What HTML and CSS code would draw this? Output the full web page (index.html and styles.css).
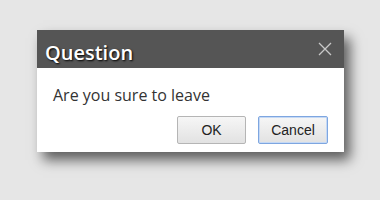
FILE: index.html
```html
<!DOCTYPE html>
<html lang="en">
<head>
  <meta charset="UTF-8">
  <title>Question</title>
  <link rel="stylesheet" href="styles.css">
</head>
<body>

<div class="dialog">
  <div class="dialog-title">
    <span class="title-text">Question</span>
    <svg class="close" width="14" height="14" viewBox="0 0 14 14">
      <path d="M1 1L13 13M13 1L1 13" stroke="#c8c8c8" stroke-width="1.3" fill="none"/>
    </svg>
  </div>
  <div class="dialog-body">
    <p class="message">Are you sure to leave</p>
    <div class="buttons">
      <button class="btn">OK</button>
      <button class="btn focused">Cancel</button>
    </div>
  </div>
</div>

</body>
</html>
```

FILE: styles.css
```css
html {
  height: 100%;
}
body {
  margin: 0;
  min-height: 100%;
  padding-top: 30px;
  box-sizing: border-box;
  background: #e6e6e6;
  font-family: "Open Sans", sans-serif;
}
.dialog {
  width: 307px;
  margin-left: 37px;
  background: white;
  box-shadow: 6px 8px 12px rgba(0,0,0,0.6);
}
.dialog-title {
  height: 38px;
  background: #555555;
  display: flex;
  align-items: center;
  justify-content: space-between;
  padding: 0 12px 0 8px;
  color: white;
  font-size: 20px;
  font-weight: 600;
  text-shadow: 1px 1px 2px #000;
}
.title-text {
  margin-top: 6px;
}
.dialog-body {
  padding: 16px 16px 8px 16px;
}
.message {
  margin: 0;
  font-size: 16px;
  color: #333;
}
.buttons {
  display: flex;
  justify-content: flex-end;
  gap: 12px;
  margin-top: 10px;
}
.btn {
  width: 69px;
  height: 28px;
  font-family: "Liberation Sans", Arial, sans-serif;
  font-size: 14px;
  color: #222;
  background: linear-gradient(#f6f6f6, #e2e2e2);
  border: 1px solid #b5b5b5;
  border-radius: 2px;
}
.btn.focused {
  width: 70px;
  border-color: #7ea6e0;
  box-shadow: 0 0 0 1px #c5d9f5 inset;
}
```
